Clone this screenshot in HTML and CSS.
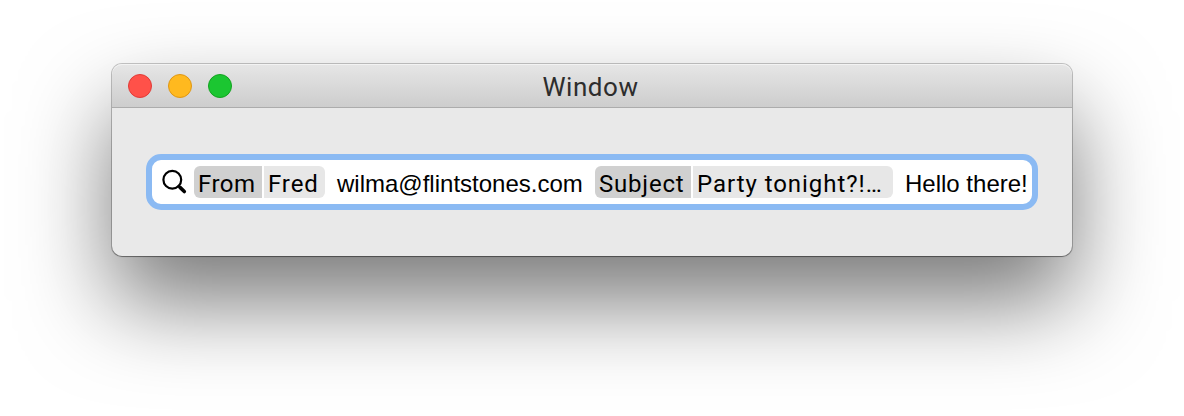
FILE: index.html
```
<!DOCTYPE html>
<html lang="en">
<head>
<meta charset="utf-8">
<title>Window</title>
<link rel="stylesheet" href="styles.css">
</head>
<body>
<main class="window">
  <header class="titlebar">
    <div class="controls">
      <span class="control close"></span>
      <span class="control minimize"></span>
      <span class="control zoom"></span>
    </div>
    <h1 class="title">Window</h1>
  </header>
  <div class="content">
    <div class="search">
      <svg class="icon" viewBox="0 0 26 26" width="26" height="26" fill="none" stroke="#000" stroke-linecap="round">
        <circle cx="10.3" cy="10.7" r="8.9" stroke-width="2.2"/>
        <path d="M16.6 17l2 2" stroke-width="2.4"/>
        <path d="M18 18.4l4.3 4.1" stroke-width="3.6"/>
      </svg>
      <span class="token from"><span class="label">From</span><span class="value">Fred</span></span>
      <span class="text email">wilma@flintstones.com</span>
      <span class="token subject"><span class="label">Subject</span><span class="value">Party tonight?!…</span></span>
      <span class="text hello">Hello there!</span>
    </div>
  </div>
</main>
</body>
</html>
```
FILE: styles.css
```
* { box-sizing: border-box; }
body {
  margin: 0;
  height: 416px;
  padding: 64px 112px;
  background: #fff;
  overflow: hidden;
}
.window {
  width: 960px;
  height: 192px;
  border-radius: 10px;
  background: #e9e9e9;
  box-shadow: 0 0 0 1px rgba(0,0,0,.21), 0 1px 1px rgba(0,0,0,.3), 0 46px 90px rgba(0,0,0,.53);
}
.titlebar {
  display: grid;
  grid-template-columns: 1fr auto 1fr;
  align-items: center;
  height: 44px;
  padding: 0 16px;
  border-bottom: 1px solid #acacac;
  border-radius: 10px 10px 0 0;
  background: linear-gradient(#e6e6e6, #cdcdcd);
  box-shadow: inset 0 1px #f3f3f3;
}
.controls { display: flex; gap: 16px; }
.control { width: 24px; height: 24px; border: 1px solid; border-radius: 50%; }
.close { background: #ff5149; border-color: #e13b37; }
.minimize { background: #ffb91f; border-color: #df9714; }
.zoom { background: #1bc631; border-color: #13a320; }
.title {
  margin: 2px 3px 0 0;
  font: 400 26px/30px Roboto, sans-serif;
  letter-spacing: .55px;
  color: #2d2d2d;
}
.content { padding: 46px 34px; }
.search {
  display: flex;
  align-items: center;
  width: 892px;
  height: 56px;
  padding-left: 10px;
  border: 6px solid #8bbaf3;
  border-radius: 15px;
  background: #fff;
  color: #000;
  white-space: nowrap;
}
.icon { flex: none; margin-right: 6px; }
.token {
  display: flex;
  flex: none;
  gap: 2px;
  height: 32px;
  border-radius: 6px;
  overflow: hidden;
  font: 24px/37px Roboto, sans-serif;
}
.label, .value { padding-left: 4px; }
.label { background: #d0d0d0; }
.value { background: #e7e7e7; }
.from .label { width: 68px; letter-spacing: .5px; }
.from .value { width: 61px; letter-spacing: .9px; }
.subject .label { width: 96px; letter-spacing: .8px; }
.subject .value { width: 200px; letter-spacing: .95px; }
.text { flex: none; padding: 3px 0 0 12px; font: 24px/32px "Liberation Sans", Arial, sans-serif; }
.email { width: 270px; }
.hello { width: 139px; }
```
